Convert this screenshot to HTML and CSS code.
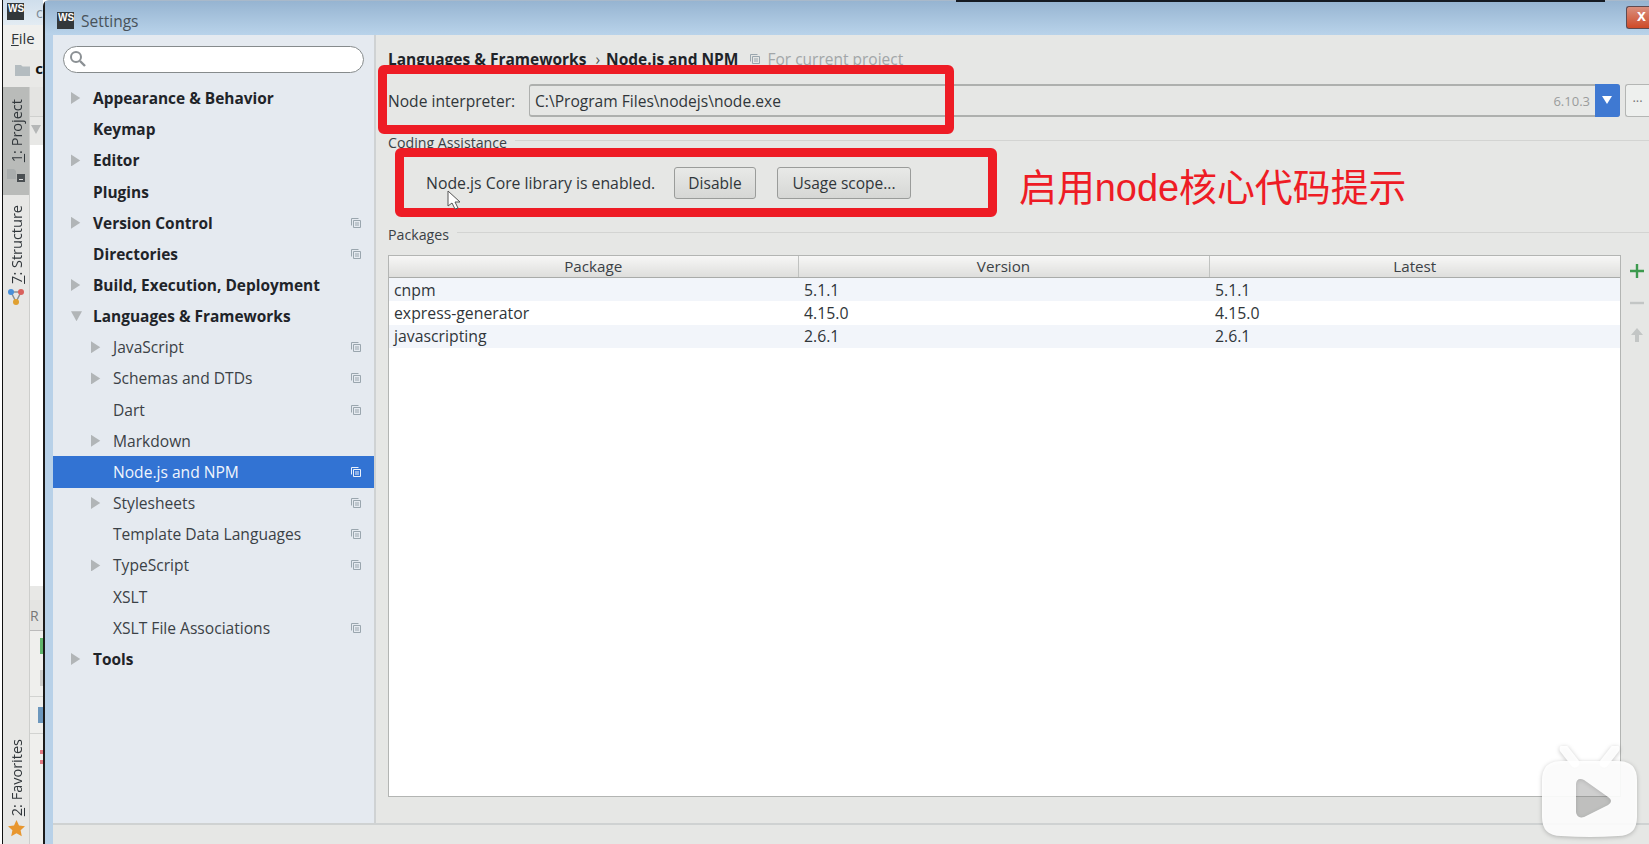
FILE: index.html
```html
<!DOCTYPE html>
<html lang="en">
<head>
  <meta charset="UTF-8" />
  <title>Settings</title>
  <link rel="stylesheet" href="styles.css">
</head>
<body>
  <svg class="defs" width="0" height="0">
    <symbol id="copy" viewBox="0 0 12 12">
      <path d="M1.5 8.5v-7h7" fill="none" stroke="currentColor"/>
      <path d="M3.5 3.5h7v7h-7z" fill="none" stroke="currentColor"/>
      <path d="M5 6h4M5 8h4" stroke="currentColor"/>
    </symbol>
  </svg>

  <div class="ide">
    <div class="ide-title">
      <span class="ws-logo">WS</span>
      <span class="ide-c">c</span>
    </div>
    <div class="ide-menu"><u>F</u>ile</div>
    <div class="ide-nav">
      <svg width="18" height="14" viewBox="0 0 18 14"><path d="M0 1h7l2 2h9v11H0z" fill="#b4bcc0"/></svg>
      <b class="ide-crumb">c</b>
    </div>
    <div class="ide-main">
      <div class="tool-strip">
        <div class="tool tool-on">
          <span class="tool-label"><u>1</u>: Project</span>
          <svg class="tool-mini" width="18" height="14" viewBox="0 0 18 14"><path d="M0 0h7l2 2v8H0z" fill="#a9adad"/><path d="M10 5h8v8h-8z" fill="#4a4f52"/><path d="M12 10h4v1h-4z" fill="#ddd"/></svg>
        </div>
        <div class="tool tool-structure">
          <span class="tool-label"><u>7</u>: Structure</span>
          <svg width="18" height="18" viewBox="0 0 18 18"><path d="M4 4h10M4 4l5 10M14 4 9 14" stroke="#8a8f92" stroke-width="1.500" fill="none"/><circle cx="4" cy="4" r="3" fill="#4a90d9"/><circle cx="14" cy="4" r="3" fill="#d9615c"/><circle cx="9" cy="14" r="3" fill="#e0a030"/></svg>
        </div>
        <div class="tool-space"></div>
        <div class="tool tool-fav">
          <span class="tool-label"><u>2</u>: Favorites</span>
          <svg width="17" height="17" viewBox="0 0 17 17"><path d="m8.500 0 2.500 5.500 6 .7-4.400 4.100 1.200 6-5.300-3-5.300 3 1.200-6L0 6.200l6-.7z" fill="#e8962e"/></svg>
        </div>
      </div>
      <div class="ide-content">
        <div class="ide-head"></div>
        <div class="ide-tri"><i></i></div>
        <div class="ide-white"></div>
        <div class="ide-tab">R</div>
        <div class="ide-run">
          <span class="bit bit-green"></span>
          <span class="bit bit-gray"></span>
          <span class="bit-line"></span>
          <span class="bit bit-blue"></span>
          <span class="bit-line"></span>
          <span class="bit bit-red"></span>
          <span class="bit bit-red"></span>
        </div>
      </div>
    </div>
  </div>

  <div class="dialog">
    <div class="titlebar">
      <span class="ws-logo">WS</span>
      <span class="title-text">Settings</span>
      <span class="close-btn">x</span>
    </div>
    <div class="dialog-body">
      <div class="sidebar">
        <div class="search">
          <svg width="18" height="18" viewBox="0 0 18 18"><circle cx="7" cy="7" r="5" fill="none" stroke="#8b9094" stroke-width="2"/><path d="m11 11 5 5" stroke="#8b9094" stroke-width="2.400"/></svg>
        </div>
        <ul class="tree">
          <li class="row top"><i class="arrow"></i>Appearance &amp; Behavior</li>
          <li class="row top"><i class="no-arrow"></i>Keymap</li>
          <li class="row top"><i class="arrow"></i>Editor</li>
          <li class="row top"><i class="no-arrow"></i>Plugins</li>
          <li class="row top"><i class="arrow"></i>Version Control<svg class="copy"><use href="#copy"/></svg></li>
          <li class="row top"><i class="no-arrow"></i>Directories<svg class="copy"><use href="#copy"/></svg></li>
          <li class="row top"><i class="arrow"></i>Build, Execution, Deployment</li>
          <li class="row top"><i class="arrow-down"></i>Languages &amp; Frameworks</li>
          <li class="row sub"><i class="arrow"></i>JavaScript<svg class="copy"><use href="#copy"/></svg></li>
          <li class="row sub"><i class="arrow"></i>Schemas and DTDs<svg class="copy"><use href="#copy"/></svg></li>
          <li class="row sub"><i class="no-arrow"></i>Dart<svg class="copy"><use href="#copy"/></svg></li>
          <li class="row sub"><i class="arrow"></i>Markdown</li>
          <li class="row sub selected"><i class="no-arrow"></i>Node.js and NPM<svg class="copy"><use href="#copy"/></svg></li>
          <li class="row sub"><i class="arrow"></i>Stylesheets<svg class="copy"><use href="#copy"/></svg></li>
          <li class="row sub"><i class="no-arrow"></i>Template Data Languages<svg class="copy"><use href="#copy"/></svg></li>
          <li class="row sub"><i class="arrow"></i>TypeScript<svg class="copy"><use href="#copy"/></svg></li>
          <li class="row sub"><i class="no-arrow"></i>XSLT</li>
          <li class="row sub"><i class="no-arrow"></i>XSLT File Associations<svg class="copy"><use href="#copy"/></svg></li>
          <li class="row top"><i class="arrow"></i>Tools</li>
        </ul>
      </div>

      <div class="content">
        <div class="crumbs">
          <b>Languages &amp; Frameworks</b>
          <span class="crumb-sep">›</span>
          <b>Node.js and NPM</b>
          <svg class="copy crumb-copy"><use href="#copy"/></svg>
          <span class="crumb-note">For current project</span>
        </div>

        <div class="interp">
          <label>Node interpreter:</label>
          <div class="interp-field">
            <span class="interp-path">C:\Program Files\nodejs\node.exe</span>
            <span class="interp-ver">6.10.3</span>
            <span class="interp-drop"></span>
          </div>
          <span class="interp-more">...</span>
        </div>

        <div class="group-title">Coding Assistance</div>
        <div class="core">
          <span class="core-text">Node.js Core library is enabled.</span>
          <button class="btn btn-disable">Disable</button>
          <button class="btn btn-scope">Usage scope...</button>
          <span class="note">启用node核心代码提示</span>
        </div>

        <div class="group-title group-packages">Packages</div>
        <div class="packages">
          <div class="table-box">
            <table>
              <thead>
                <tr><th>Package</th><th>Version</th><th>Latest</th></tr>
              </thead>
              <tbody>
                <tr><td>cnpm</td><td>5.1.1</td><td>5.1.1</td></tr>
                <tr><td>express-generator</td><td>4.15.0</td><td>4.15.0</td></tr>
                <tr><td>javascripting</td><td>2.6.1</td><td>2.6.1</td></tr>
              </tbody>
            </table>
          </div>
          <div class="table-tools">
            <svg width="16" height="16" viewBox="0 0 16 16"><path d="M8 1v14M1 8h14" stroke="#3c9a4e" stroke-width="2.400"/></svg>
            <svg width="16" height="16" viewBox="0 0 16 16"><path d="M1 8h14" stroke="#c3c6c5" stroke-width="2.400"/></svg>
            <svg width="16" height="16" viewBox="0 0 16 16"><path d="M8 1 2 8h4v7h4V8h4z" fill="#c3c6c5"/></svg>
          </div>
        </div>
      </div>
    </div>
    <div class="footer"></div>
  </div>

  <div class="top-bar"></div>
  <div class="redbox redbox-interp"></div>
  <div class="redbox redbox-core"></div>

  <svg class="cursor" width="16" height="20" viewBox="0 0 16 20"><path d="M1 1v15l4-3 3 6 3-1-3-6h5z" fill="#fff" stroke="#555"/></svg>

  <svg class="tv" width="97" height="92" viewBox="0 0 97 92">
    <path d="M23 3 34 17M74 3 63 17" stroke="#fff" stroke-opacity=".92" stroke-width="9" stroke-linecap="round"/>
    <path fill-rule="evenodd" fill="#fff" fill-opacity=".92" d="M20 15h57q19 0 19 19v37q0 19-19 19-28 2-57 0-19 0-19-19V34q0-19 19-19zM35 38v28q1 7 8 5l24-12q6-4 0-8L43 34q-7-3-8 4z"/>
    <path fill="#8a8a8a" fill-opacity=".3" d="M35 38v28q1 7 8 5l24-12q6-4 0-8L43 34q-7-3-8 4z"/>
  </svg>
</body>
</html>
```

FILE: styles.css
```css
* {
  box-sizing: border-box;
}
html, body {
  height: 844px;
}
body {
  margin: 0;
  width: 1649px;
  overflow: hidden;
  display: flex;
  position: relative;
  background: #fff;
  font-family: "Open Sans", "Noto Sans", sans-serif;
  font-size: 14px;
  color: #30363a;
}
.defs {
  position: absolute;
}
ul {
  list-style: none;
  margin: 0;
  padding: 0;
}
.ws-logo {
  width: 17px;
  height: 17px;
  background: #33383b;
  color: #fff;
  font-family: "Liberation Sans", sans-serif;
  font-size: 10px;
  font-weight: bold;
  line-height: 12px;
  padding-left: 1px;
  flex: none;
}

/* ide behind the dialog */
.ide {
  width: 41px;
  flex: none;
  display: flex;
  flex-direction: column;
  margin-left: 2px;
  border-left: 1px solid #111;
  background: #e8e8e6;
}
.ide-title {
  height: 25px;
  display: flex;
  align-items: flex-start;
  gap: 12px;
  padding: 3px 0 0 4px;
  background: linear-gradient(#cfdeec, #e3ecf3);
}
.ide-c {
  color: #7d8a94;
  line-height: 20px;
}
.ide-menu {
  height: 25px;
  padding-left: 8px;
  line-height: 27px;
  font-size: 15px;
  background: #f0f0ee;
  white-space: nowrap;
}
.ide-nav {
  height: 37px;
  display: flex;
  align-items: flex-start;
  padding: 13px 0 0 12px;
  background: #e9e9e7;
  overflow: hidden;
}
.ide-crumb {
  margin: -5px 0 0 5px;
  color: #111;
  font-size: 15px;
}
.ide-main {
  flex: 1;
  display: flex;
  min-height: 0;
}
.tool-strip {
  width: 27px;
  flex: none;
  display: flex;
  flex-direction: column;
  background: #e7e7e5;
  border-right: 1px solid #cdcecc;
}
.tool {
  display: flex;
  flex-direction: column;
  align-items: center;
}
.tool-label {
  writing-mode: vertical-rl;
  transform: rotate(180deg);
  font-size: 14.500px;
  white-space: nowrap;
}
.tool-on {
  height: 108px;
  padding-top: 12px;
  background: #b9bbb9;
}
.tool-mini {
  margin-top: 7px;
}
.tool-structure {
  padding-top: 10px;
  gap: 4px;
}
.tool-space {
  flex: 1;
}
.tool-fav {
  gap: 4px;
  padding-bottom: 7px;
}
.ide-content {
  flex: 1;
  display: flex;
  flex-direction: column;
  overflow: hidden;
}
.ide-head {
  height: 30px;
  background: #e4e4e2;
  border-bottom: 1px solid #cfd0ce;
}
.ide-tri {
  height: 28px;
  padding: 8px 0 0 1px;
  background: #e8e8e6;
}
.ide-tri i {
  display: block;
  width: 10px;
  height: 9px;
  background: #b5b7b7;
  clip-path: polygon(0 0, 100% 0, 50% 100%);
}
.ide-white {
  height: 441px;
  background: #fff;
}
.ide-tab {
  height: 31px;
  margin-top: 14px;
  padding-top: 6px;
  background: #e4e4e2;
  color: #777;
  border-bottom: 1px solid #bbb;
}
.ide-run {
  flex: 1;
  display: flex;
  flex-direction: column;
  align-items: flex-end;
  padding-top: 7px;
  background: #efefed;
}
.bit {
  width: 3px;
  height: 16px;
}
.bit-green {
  background: #5fb56c;
}
.bit-gray {
  margin-top: 16px;
  background: #cfcfcd;
}
.bit-line {
  width: 100%;
  height: 1px;
  margin: 10px 0;
  background: #d2d3d1;
}
.bit-blue {
  width: 5px;
  background: #6c97bd;
}
.bit-red {
  width: 3px;
  height: 4px;
  margin-top: 6px;
  background: #e07a84;
}

/* settings dialog */
.dialog {
  flex: 1;
  display: flex;
  flex-direction: column;
  border-left: 2px solid #1a1a1a;
  border-top-left-radius: 6px;
  border-top: 1px solid #a9b9ca;
  background: #b8d1e8;
  min-width: 0;
}
.titlebar {
  height: 34px;
  flex: none;
  display: flex;
  align-items: center;
  padding: 5px 0 0 12px;
  gap: 7px;
  background: linear-gradient(#96b4d1, #b9d3ea);
}
.title-text {
  font-size: 15.500px;
  color: #48525a;
}
.close-btn {
  margin-left: auto;
  width: 23px;
  height: 23px;
  margin-top: -6px;
  border: 1px solid #5f4a50;
  border-right: 0;
  border-radius: 3px 0 0 3px;
  background: linear-gradient(#d98f7e, #cf4a28);
  color: #fff;
  font: bold 16px/18px "Liberation Sans", sans-serif;
  padding-left: 10px;
}
.dialog-body {
  flex: 1;
  display: flex;
  margin-left: 8px;
  min-height: 0;
}
.sidebar {
  width: 323px;
  flex: none;
  padding-top: 11px;
  background: #e5eaf0;
  border-right: 2px solid #cfd2d3;
}
.search {
  height: 27px;
  margin: 0 10px 0 10px;
  padding: 3px 0 0 5px;
  background: #fff;
  border: 1px solid #868b8c;
  border-radius: 14px;
}
.tree {
  margin-top: 9.500px;
}
.row {
  height: 31.170px;
  display: flex;
  align-items: center;
  white-space: nowrap;
  padding-right: 12px;
  color: #3b4146;
  font-size: 15.600px;
}
.top {
  padding-left: 18px;
  font-size: 15.450px;
  font-weight: bold;
  color: #1f2429;
}
.sub {
  padding-left: 38px;
}
.row i {
  width: 22px;
  flex: none;
}
.arrow {
  height: 12px;
  background: #b1b5b7;
  clip-path: polygon(0 0, 42% 50%, 0 100%);
}
.arrow-down {
  height: 10px;
  background: #b1b5b7;
  clip-path: polygon(0 0, 50% 0, 25% 100%);
}
.copy {
  width: 12px;
  height: 12px;
  margin-left: auto;
  color: #9aa6ae;
}
.selected {
  background: #3273d3;
  color: #f0f5fc;
}
.selected .copy {
  color: #eaf1fb;
}

.content {
  flex: 1;
  min-width: 0;
  padding: 12px 0 0 12px;
  background: #e6e7e5;
}
.crumbs {
  display: flex;
  align-items: center;
  height: 24px;
  color: #1f2429;
  font-size: 15.500px;
  white-space: nowrap;
}
.crumb-sep {
  margin: 0 6px 0 9px;
  color: #555;
}
.crumb-copy {
  margin: 0 6px 0 11px;
}
.crumb-note {
  color: #a2a6a8;
}
.interp {
  display: flex;
  align-items: center;
  margin-top: 13px;
  height: 33px;
}
.interp label {
  width: 141px;
  flex: none;
  font-size: 15.600px;
}
.interp-field {
  width: 1091px;
  height: 33px;
  flex: none;
  display: flex;
  align-items: center;
  padding-left: 5px;
  border: 1px solid #aeb0ae;
  border-width: 2px 1px;
  border-radius: 3px;
}
.interp-path {
  font-size: 15.600px;
}
.interp-ver {
  margin-left: auto;
  margin-right: 5px;
  font-size: 13px;
  color: #9a9c9c;
}
.interp-drop {
  width: 25px;
  height: 33px;
  flex: none;
  margin-right: -1px;
  position: relative;
  background: #3f79d2;
  border-radius: 0 3px 3px 0;
}
.interp-drop::after {
  content: "";
  position: absolute;
  left: 7px;
  top: 12px;
  border: 5px solid transparent;
  border-width: 8px 5px 0;
  border-top-color: #fff;
}
.interp-more {
  width: 30px;
  height: 33px;
  margin-left: 5px;
  border: 1px solid #b4b6b4;
  border-right: 0;
  border-radius: 3px 0 0 3px;
  background: #eef0ee;
  text-align: center;
  line-height: 24px;
  color: #777;
  font-size: 13px;
}
.group-title {
  display: flex;
  align-items: center;
  gap: 8px;
  height: 20px;
  margin-top: 15px;
  font-size: 14.200px;
  color: #3b4146;
}
.group-title::after {
  content: "";
  flex: 1;
  height: 1px;
  margin-top: -3px;
  background: #d3d4d2;
}
.core {
  height: 50px;
  margin-top: 6px;
  display: flex;
  align-items: center;
  padding-left: 38px;
  white-space: nowrap;
}
.core-text {
  width: 248px;
  flex: none;
  font-size: 15.800px;
}
.btn {
  height: 32px;
  padding: 0;
  border: 1px solid #9a9c9a;
  border-radius: 3px;
  background: linear-gradient(#e8e9e7, #d6d7d5);
  font: 15.500px "Open Sans", sans-serif;
  color: #30363a;
}
.btn-disable {
  width: 82px;
}
.btn-scope {
  width: 134px;
  margin-left: 21px;
}
.note {
  margin-left: 108px;
  margin-top: 3px;
  font-family: "Liberation Sans", "Noto Sans CJK SC", sans-serif;
  font-size: 37.900px;
  color: #ee1c25;
}
.group-packages {
  margin-top: 16px;
}
.packages {
  display: flex;
  margin-top: 11px;
  height: 542px;
}
.table-box {
  width: 1233px;
  flex: none;
  background: #fff;
  border: 1px solid #b3b5b3;
}
table {
  width: 100%;
  border-collapse: collapse;
  table-layout: fixed;
  font-size: 15.800px;
}
th {
  height: 21px;
  padding: 0 0 1px;
  font-weight: normal;
  font-size: 15.200px;
  background: linear-gradient(#f7f7f6, #dededc);
  border-bottom: 1px solid #a9aba9;
  border-right: 1px solid #c0c2c0;
  color: #3b4146;
}
th:nth-child(1), th:nth-child(2) {
  width: 411px;
}
th:nth-child(1) {
  width: 409px;
}
th:last-child {
  border-right: 0;
}
td {
  height: 23.500px;
  padding: 0 6px;
}
td:first-child {
  padding-left: 5px;
}
tbody tr:nth-child(odd) td {
  background: #f2f5fa;
}
.table-tools {
  flex: 1;
  display: flex;
  flex-direction: column;
  gap: 16px;
  padding: 8px 0 0 8px;
}
.footer {
  height: 21px;
  flex: none;
  margin-left: 8px;
  background: #e6e7e5;
  border-top: 2px solid #cfd2d2;
}

/* things that lie over the window */
.top-bar {
  position: absolute;
  left: 956px;
  top: 0;
  width: 649px;
  height: 2px;
  background: #151a22;
}
.redbox {
  position: absolute;
  border: 9px solid #ee1c25;
  border-radius: 6px;
}
.redbox-interp {
  left: 378px;
  top: 65px;
  width: 576px;
  height: 69px;
}
.redbox-core {
  left: 395px;
  top: 148px;
  width: 602px;
  height: 69px;
}
.cursor {
  position: absolute;
  left: 447px;
  top: 190px;
}
.tv {
  position: absolute;
  left: 1541px;
  top: 746px;
  filter: drop-shadow(0 1px 2px rgba(0,0,0,0.25));
}
```
